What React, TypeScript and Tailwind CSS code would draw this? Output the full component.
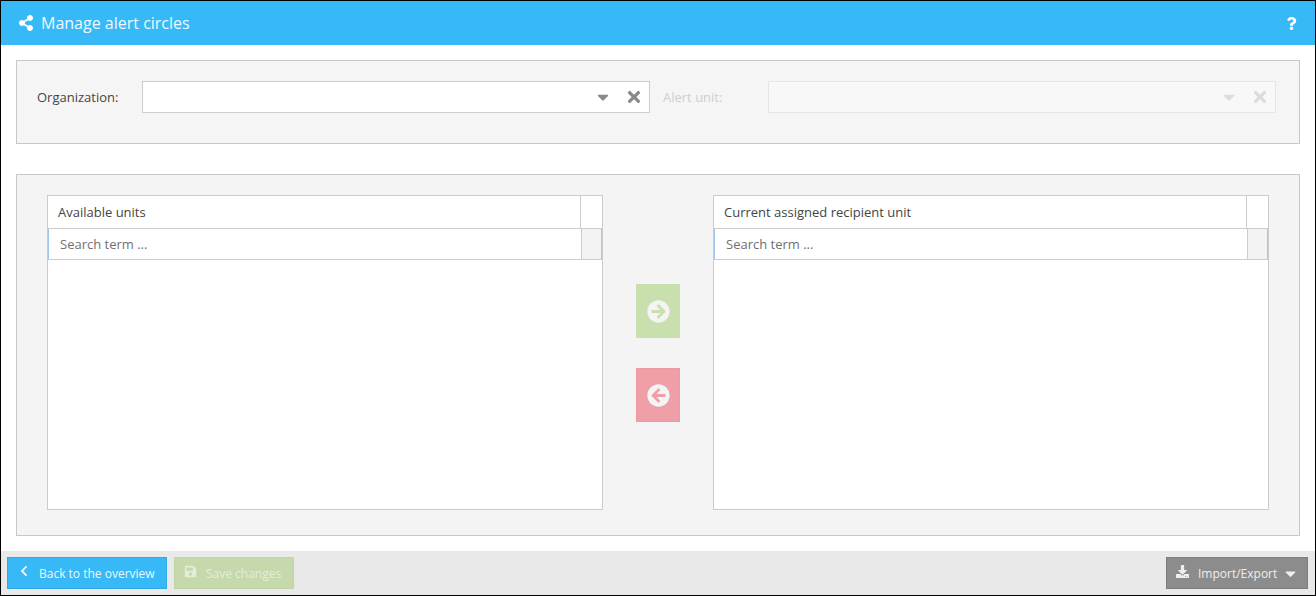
import { FaArrowCircleLeft, FaArrowCircleRight, FaCaretDown, FaChevronLeft, FaDownload, FaQuestion, FaSave, FaShareAlt, FaTimes } from "react-icons/fa";

function Select({ disabled }: { disabled?: boolean }) {
  return (
    <div
      className={
        disabled
          ? "flex h-[32px] w-[508px] items-center justify-end border border-[#e6e6e6] bg-[#f8f8f8] text-[#dcdcdc]"
          : "flex h-[32px] w-[508px] items-center justify-end border border-[#cccccc] bg-white text-[#8a8a8a]"
      }
    >
      <FaCaretDown className="mr-[13px] text-[18px]" />
      <FaTimes className="mr-[6px] text-[18px]" />
    </div>
  );
}

function UnitList({ title }: { title: string }) {
  return (
    <div className="flex h-[315px] w-[556px] flex-col border border-[#cccccc] bg-white">
      <div className="flex h-[32px] shrink-0">
        <div className="flex-1 border-r border-[#cccccc] pl-[10px] leading-[33px] text-[#444444]">{title}</div>
        <div className="w-[21px]" />
      </div>
      <div className="flex h-[32px] shrink-0 border-y border-[#cccccc]">
        <div className="flex-1 border-l border-[#a3c6ee] pl-[11px] leading-[30px] text-[#707070]">Search term ...</div>
        <div className="w-[21px] border-x border-x-[#cccccc] border-r-[#a3c6ee] bg-[#f3f3f3]" />
      </div>
    </div>
  );
}

export default function App() {
  return (
    <div className="flex h-[596px] w-[1316px] flex-col border border-black bg-white font-['Open_Sans',sans-serif] text-[13px]">
      {/* Title bar */}
      <div className="flex h-[44px] shrink-0 items-center justify-between bg-[#37b8f7] pl-[17px] pr-[17px] text-white">
        <div className="flex items-center gap-[7px]">
          <FaShareAlt className="text-[16px]" />
          <span className="text-[16px] text-[#eef9fe]">Manage alert circles</span>
        </div>
        <FaQuestion className="text-[13px]" />
      </div>

      <div className="flex-1 px-[15px] pt-[15px]">
        {/* Filter */}
        <div className="flex h-[84px] items-start border border-[#c8c8c8] bg-[#f5f5f5] px-[20px] pt-[20px]">
          <span className="w-[105px] leading-[32px] text-[#444444]">Organization:</span>
          <Select />
          <span className="w-[118px] pl-[13px] leading-[32px] text-[#cfcfcf]">Alert unit:</span>
          <Select disabled />
        </div>

        {/* Assignment */}
        <div className="mt-[30px] flex h-[362px] items-start border border-[#c8c8c8] bg-[#f4f4f4] pl-[30px] pt-[20px]">
          <UnitList title="Available units" />
          <div className="flex w-[110px] flex-col items-center gap-[30px] pt-[89px]">
            <div className="flex h-[54px] w-[44px] items-center justify-center border border-[#c9dfae] bg-[#cadfae] text-[#f4f4f4]">
              <FaArrowCircleRight className="text-[23px]" />
            </div>
            <div className="flex h-[54px] w-[44px] items-center justify-center border border-[#ee9aa3] bg-[#ef9fa8] text-[#f4f4f4]">
              <FaArrowCircleLeft className="text-[23px]" />
            </div>
          </div>
          <UnitList title="Current assigned recipient unit" />
        </div>
      </div>

      {/* Footer */}
      <div className="flex h-[44px] shrink-0 items-start justify-between bg-[#e9e9e9] px-[6px] pt-[6px] text-[12px] leading-[32px]">
        <div className="flex gap-[7px]">
          <div className="flex h-[32px] w-[160px] items-center border border-[#2fa9e8] bg-[#37b8f7] pl-[10px] text-[#e9f7fe]">
            <FaChevronLeft className="mb-[4px] mr-[9px] text-[12px]" />
            <span className="pt-[2px]">Back to the overview</span>
          </div>
          <div className="flex h-[32px] w-[120px] items-center border border-[#c0d6a6] bg-[#c6d9ac] pl-[9px] text-[#e4edd8]">
            <FaSave className="mb-[4px] mr-[9px] text-[13px]" />
            <span className="pt-[2px]">Save changes</span>
          </div>
        </div>
        <div className="mr-[1px] flex h-[32px] w-[142px] items-center border border-[#7d7d7d] bg-[#8c8c8c] pl-[9px] text-[#eeeeee]">
          <FaDownload className="mb-[4px] mr-[9px] text-[13px]" />
          <span className="pt-[2px]">Import/Export</span>
          <FaCaretDown className="ml-[5px] text-[17px]" />
        </div>
      </div>
    </div>
  );
}
